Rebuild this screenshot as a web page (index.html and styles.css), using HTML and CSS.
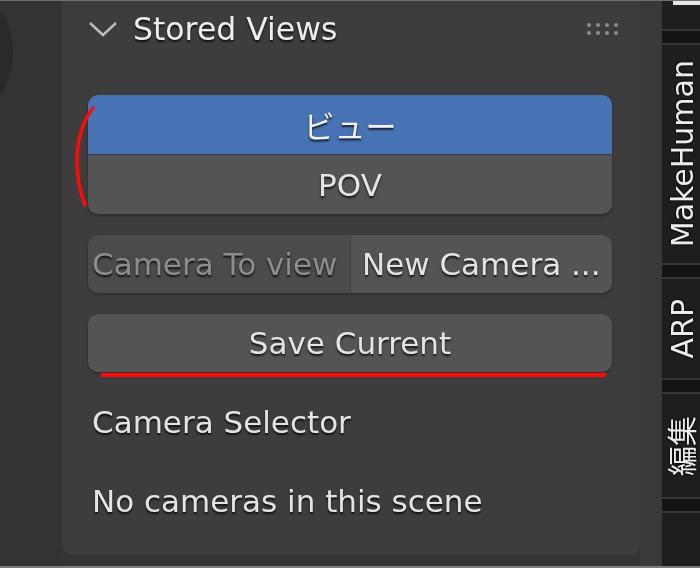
FILE: index.html
```html
<!DOCTYPE html>
<html lang="ja">
<head>
<meta charset="utf-8">
<title>Stored Views</title>
<link rel="stylesheet" href="styles.css">
</head>
<body>
<div class="screen">
  <div class="view"><div class="gizmo"></div></div>
  <section class="panel">
    <header class="panel-header">
      <svg class="chev" width="30" height="16" viewBox="0 0 30 16"><polyline points="2,2 15,14 28,2" fill="none" stroke="#bdbdbd" stroke-width="2.4" stroke-linejoin="miter"/></svg>
      <span class="title">Stored Views</span>
      <svg class="grip" width="36" height="16" viewBox="0 0 36 16">
        <g fill="#8c8c8c">
          <circle cx="3" cy="4" r="2"/><circle cx="12" cy="4" r="2"/><circle cx="21" cy="4" r="2"/><circle cx="30" cy="4" r="2"/>
          <circle cx="3" cy="12" r="2"/><circle cx="12" cy="12" r="2"/><circle cx="21" cy="12" r="2"/><circle cx="30" cy="12" r="2"/>
        </g>
      </svg>
    </header>
    <div class="panel-body">
      <div class="list">
        <div class="item active">ビュー</div>
        <div class="item">POV</div>
      </div>
      <div class="split">
        <div class="split-label">Camera To view</div>
        <div class="split-value">New Camera ...</div>
      </div>
      <div class="button">Save Current</div>
      <div class="text-row">Camera Selector</div>
      <div class="text-row">No cameras in this scene</div>
    </div>
  </section>
  <div class="strip"></div>
  <nav class="tabs">
    <div class="tab tab-first"></div>
    <div class="tab tab-mh"><span class="tab-text">MakeHuman</span></div>
    <div class="tab tab-arp"><span class="tab-text">ARP</span></div>
    <div class="tab tab-edit"><span class="tab-text">編集</span></div>
    <div class="tab tab-last"></div>
  </nav>
  <svg class="marks" width="700" height="568" viewBox="0 1 700 568">
    <path d="M93 108 C 83 120, 77 140, 77 160 C 77 180, 80 193, 85 205" fill="none" stroke="#ff0a0a" stroke-width="3.5" stroke-linecap="round"/>
    <line x1="101" y1="375" x2="606" y2="375" stroke="#ff0a0a" stroke-width="4"/>
  </svg>
</div>
</body>
</html>
```

FILE: styles.css
```css
html, body {
  margin: 0;
  padding: 0;
  background: #343434;
}

.screen {
  position: relative;
  width: 700px;
  height: 568px;
  box-sizing: border-box;
  border-top: 1px solid #6f6f6f;
  border-bottom: 2px solid #7c7c7c;
  display: flex;
  overflow: hidden;
  background: #343434;
  font-family: "DejaVu Sans", "Noto Sans CJK JP", sans-serif;
  font-size: 31px;
  color: #e4e4e4;
  text-shadow: 0 2px 2px rgba(0, 0, 0, 0.75);
  filter: blur(0.4px);
}

.view {
  width: 62px;
  flex: none;
  position: relative;
  background: #333333;
}

.gizmo {
  position: absolute;
  left: -38px;
  top: 4px;
  width: 51px;
  height: 96px;
  border-radius: 50%;
  background: #2a2a2a;
}

.panel {
  width: 578px;
  height: 554px;
  flex: none;
  box-sizing: border-box;
  padding: 0 28px 0 26px;
  background: #3d3d3d;
  border-radius: 0 0 10px 10px;
  display: flex;
  flex-direction: column;
}

.panel-header {
  height: 56px;
  display: flex;
  align-items: center;
}

.chev {
  flex: none;
  margin-right: 15px;
}

.title {
  flex: 1;
  color: #ededed;
  line-height: 36px;
  font-size: 31.5px;
}

.grip {
  flex: none;
  margin-right: -10px;
}

.panel-body {
  padding-top: 38px;
  display: flex;
  flex-direction: column;
  gap: 21px;
}

.list {
  border-radius: 10px;
  overflow: hidden;
  display: flex;
  flex-direction: column;
  box-shadow: 0 2px 3px rgba(0, 0, 0, 0.3);
}

.item {
  height: 59px;
  display: flex;
  align-items: center;
  justify-content: center;
  background: #545454;
}

.item + .item {
  border-top: 1px solid #3b3b3b;
}

.item.active {
  background: #4772b3;
  color: #f2f2f2;
}

.split {
  height: 58px;
  display: flex;
  border-radius: 10px;
  overflow: hidden;
  box-shadow: 0 2px 3px rgba(0, 0, 0, 0.25);
}

.split-label {
  width: 262px;
  flex: none;
  box-sizing: border-box;
  padding-left: 4px;
  display: flex;
  align-items: center;
  background: #4b4b4b;
  color: #8d8d8d;
  white-space: nowrap;
  overflow: hidden;
}

.split-value {
  flex: 1;
  box-sizing: border-box;
  padding-left: 11px;
  display: flex;
  align-items: center;
  background: #545454;
  border-left: 1px solid #424242;
  white-space: nowrap;
  overflow: hidden;
}

.button {
  height: 58px;
  display: flex;
  align-items: center;
  justify-content: center;
  background: #545454;
  border-radius: 10px;
  box-shadow: 0 2px 3px rgba(0, 0, 0, 0.25);
}

.text-row {
  height: 58px;
  display: flex;
  align-items: center;
  padding-left: 4px;
  white-space: nowrap;
}

.strip {
  width: 22px;
  flex: none;
  background: #393939;
}

.tabs {
  width: 38px;
  flex: none;
  background: #141414;
  display: flex;
  flex-direction: column;
  gap: 12px;
  overflow: hidden;
}

.tab {
  flex: none;
  box-sizing: border-box;
  background: #1e1e1e;
  border-top: 2px solid #363636;
  border-bottom: 2px solid #363636;
  display: flex;
  flex-direction: column;
  justify-content: center;
  overflow: hidden;
  padding-left: 6px;
}

.tab-first {
  height: 30px;
  border-top: none;
  position: relative;
}

.tab-first::after {
  content: "";
  position: absolute;
  left: 11px;
  top: 0;
  width: 27px;
  height: 4px;
  background: #e6e6e6;
}

.tab-mh { height: 222px; }
.tab-arp { height: 103px; }
.tab-edit { height: 107px; }
.tab-last { flex: 1; border-bottom: none; }

.tab-text {
  writing-mode: vertical-rl;
  text-orientation: sideways;
  transform: rotate(180deg);
  font-size: 30px;
  line-height: 30px;
  color: #ececec;
  white-space: nowrap;
  text-shadow: 0 0 2px #000, 0 0 2px #000;
}

.marks {
  position: absolute;
  left: 0;
  top: 0;
  pointer-events: none;
}
```
